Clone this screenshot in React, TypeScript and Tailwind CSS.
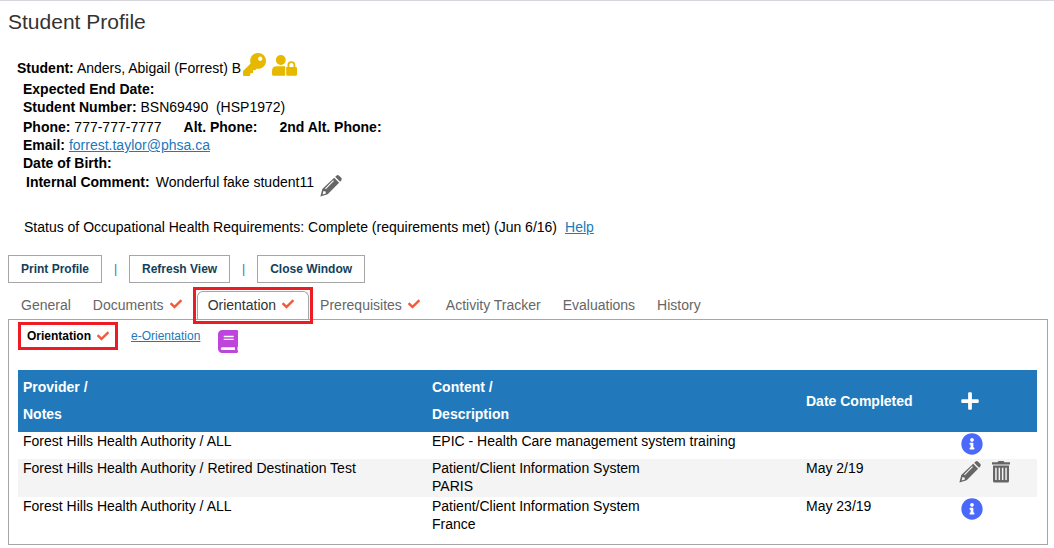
import { useState } from 'react';
import { FaBook, FaCheck, FaInfoCircle, FaKey, FaPlus } from 'react-icons/fa';

interface Tab {
  name: string;
  complete?: boolean;
}

interface OrientationRecord {
  id: number;
  provider: string;
  content: string;
  description?: string;
  completed?: string;
  editable?: boolean;
}

const tabs: Tab[] = [
  { name: 'General' },
  { name: 'Documents', complete: true },
  { name: 'Orientation', complete: true },
  { name: 'Prerequisites', complete: true },
  { name: 'Activity Tracker' },
  { name: 'Evaluations' },
  { name: 'History' },
];

const records: OrientationRecord[] = [
  {
    id: 1,
    provider: 'Forest Hills Health Authority / ALL',
    content: 'EPIC - Health Care management system training',
  },
  {
    id: 2,
    provider: 'Forest Hills Health Authority / Retired Destination Test',
    content: 'Patient/Client Information System',
    description: 'PARIS',
    completed: 'May 2/19',
    editable: true,
  },
  {
    id: 3,
    provider: 'Forest Hills Health Authority / ALL',
    content: 'Patient/Client Information System',
    description: 'France',
    completed: 'May 23/19',
  },
];

const actions = ['Print Profile', 'Refresh View', 'Close Window'];

function PencilIcon() {
  return (
    <svg viewBox="0 0 22 22" className="size-[22px]" fill="currentColor">
      <path d="M15.200 1.800 16.600.6q1.300-1 2.500.1l2.100 2.100q1.100 1.200.1 2.500L20.100 6.700z" />
      <path
        fillRule="evenodd"
        d="M14.200 2.800 19.100 7.700 7.700 19.300.4 21.600 2.300 14zM13.100 5.200 5 13.400l.8.8L13.900 6zM3.500 16 2.600 19.400 5.900 18.500 5.500 16.600z"
      />
    </svg>
  );
}

function UserLockIcon() {
  return (
    <svg viewBox="0 0 25 21" className="h-[21px] w-[25px]" fill="currentColor">
      <circle cx="8.800" cy="5" r="4.900" />
      <path d="M4.600 11.200h8.600V20.800H1.600Q0 20.800 0 19.300v-3.200q0-4.900 4.600-4.900z" />
      <path
        fillRule="evenodd"
        d="M14.200 12h1.300v-2q0-3.700 3.900-3.700t3.900 3.700v2h.5q1.200 0 1.200 1.200v6.400q0 1.200-1.200 1.200h-8.400q-1.200 0-1.200-1.200zM17.300 12h4.200v-2q0-1.900-2.100-1.900t-2.100 1.900z"
      />
    </svg>
  );
}

function TrashIcon() {
  return (
    <svg viewBox="0 0 18 22" className="h-[22px] w-[18px]" fill="currentColor">
      <path d="M0 1.200h5.500L6.500 0h5l1 1.200H18v2.300H0z" />
      <path
        fillRule="evenodd"
        d="M1 4.500h16V20a1.500 1.500 0 0 1-1.500 1.500h-13A1.500 1.500 0 0 1 1 20zM3.200 6.700v12.300h1.500V6.700zM6.600 6.700v12.300h1.500V6.700zM9.900 6.700v12.300h1.500V6.700zM13.300 6.700v12.300h1.500V6.700z"
      />
    </svg>
  );
}

export default function App() {
  const [activeTab, setActiveTab] = useState('Orientation');

  return (
    <div className="border-t border-[#d6d6dc] bg-white pr-1.5 pl-2 font-['Liberation_Sans',Arial,sans-serif] text-sm leading-[18px] text-black">
      <h1 className="pt-[9px] text-[21px] leading-6 text-[#333]">Student Profile</h1>

      {/* Student details */}
      <div className="pt-4 pl-[15px]">
        <div className="-ml-1.5 flex h-[30px] items-center">
          <p className="pt-1.5">
            <b>Student:</b> Anders, Abigail (Forrest) B
          </p>
          <button type="button" aria-label="Access" className="ml-0.5 pb-0.5 text-[#e6b800]">
            <FaKey className="size-[23px]" />
          </button>
          <button type="button" aria-label="Privacy" className="ml-1.5 text-[#e6b800]">
            <UserLockIcon />
          </button>
        </div>
        <p className="font-bold">Expected End Date:</p>
        <p>
          <b>Student Number:</b> BSN69490&nbsp; (HSP1972)
        </p>
        <div className="flex pt-0.5">
          <p>
            <b>Phone:</b> 777-777-7777
          </p>
          <b className="ml-[22px]">Alt. Phone:</b>
          <b className="ml-[22px]">2nd Alt. Phone:</b>
        </div>
        <p>
          <b>Email:</b>{' '}
          <a href="mailto:forrest.taylor@phsa.ca" className="text-[#2179bb] underline">
            forrest.taylor@phsa.ca
          </a>
        </p>
        <p className="font-bold">Date of Birth:</p>
        <div className="flex items-start pl-[3px] pt-px">
          <b>Internal Comment:</b>
          <span className="ml-1.5">Wonderful fake student11</span>
          <button type="button" aria-label="Edit comment" className="ml-1.5 pt-0.5 text-[#666]">
            <PencilIcon />
          </button>
        </div>
        <p className="pt-[21px] pl-px">
          Status of Occupational Health Requirements: Complete (requirements met) (Jun 6/16)
          <a href="#help" className="ml-2 text-[#2179bb] underline">
            Help
          </a>
        </p>
      </div>

      {/* Page actions */}
      <div className="flex items-center pt-[19px]">
        {actions.map((action, i) => (
          <div key={action} className="flex items-center">
            {i > 0 && <span className="w-[27px] text-center text-xs text-[#2179bb]">|</span>}
            <button
              type="button"
              className="h-7 border border-[#a6a6a6] px-3 text-xs font-bold text-[#123f5c]"
            >
              {action}
            </button>
          </div>
        ))}
      </div>

      {/* Tabs */}
      <div role="tablist" className="flex pt-2 pl-0.5">
        {tabs.map((tab) => {
          const active = tab.name === activeTab;
          return (
            <button
              key={tab.name}
              type="button"
              role="tab"
              aria-selected={active}
              onClick={() => setActiveTab(tab.name)}
              className={`relative flex h-7 items-center ${
                active
                  ? 'rounded-t-md border border-b-0 border-[#a6a6a6] px-2.5 pb-px text-[#333]'
                  : 'px-[11px] text-[#666]'
              }`}
            >
              {tab.name}
              {tab.complete && <FaCheck className="mr-1 mb-0.5 ml-1.5 size-3 text-[#f15a3c]" />}
              {active && <span className="absolute -inset-[5px] z-10 border-3 border-[#ed1c24]" />}
            </button>
          );
        })}
      </div>

      {/* Orientation panel */}
      <div className="border border-[#a6a6a6] pt-0.5 pr-2.5 pb-[9px] pl-[9px]">
        <div className="flex h-12 items-start text-xs">
          <div className="flex h-7 items-center border-3 border-[#ed1c24] px-1.5 font-bold">
            Orientation
            <FaCheck className="ml-1.5 size-3 text-[#f15a3c]" />
          </div>
          <a href="#e-orientation" className="ml-[13px] leading-7 text-[#2179bb] underline">
            e-Orientation
          </a>
          <button type="button" aria-label="Orientation guide" className="ml-[18px] pt-2 text-[#bd45dc]">
            <FaBook className="h-[23px] w-5" />
          </button>
        </div>

        <table className="w-full table-fixed text-left">
          <colgroup>
            <col />
            <col className="w-[374px]" />
            <col className="w-[151px]" />
            <col className="w-[85px]" />
          </colgroup>
          <thead className="bg-[#2179bb] text-white">
            <tr className="h-[62px] leading-[27px]">
              <th className="px-[5px]">
                Provider /<br />
                Notes
              </th>
              <th className="px-[5px]">
                Content /<br />
                Description
              </th>
              <th className="px-[5px]">Date Completed</th>
              <th className="px-2">
                <button type="button" aria-label="Add orientation" className="block">
                  <FaPlus className="size-5" />
                </button>
              </th>
            </tr>
          </thead>
          <tbody>
            {records.map((record) => (
              <tr key={record.id} className="align-top even:bg-[#f4f4f4]">
                <td className="px-[5px] pb-0.5">{record.provider}</td>
                <td className="px-[5px] pb-0.5">
                  {record.content}
                  {record.description && <div>{record.description}</div>}
                </td>
                <td className="px-[5px] pb-0.5">{record.completed}</td>
                <td className="px-[7px] pt-px">
                  {record.editable ? (
                    <div className="flex gap-[11px] pt-px text-[#666]">
                      <button type="button" aria-label="Edit">
                        <PencilIcon />
                      </button>
                      <button type="button" aria-label="Delete">
                        <TrashIcon />
                      </button>
                    </div>
                  ) : (
                    <button type="button" aria-label="Details" className="block pb-1 pl-0.5 text-[#4a69fb]">
                      <FaInfoCircle className="size-[22px]" />
                    </button>
                  )}
                </td>
              </tr>
            ))}
          </tbody>
        </table>
      </div>
    </div>
  );
}
